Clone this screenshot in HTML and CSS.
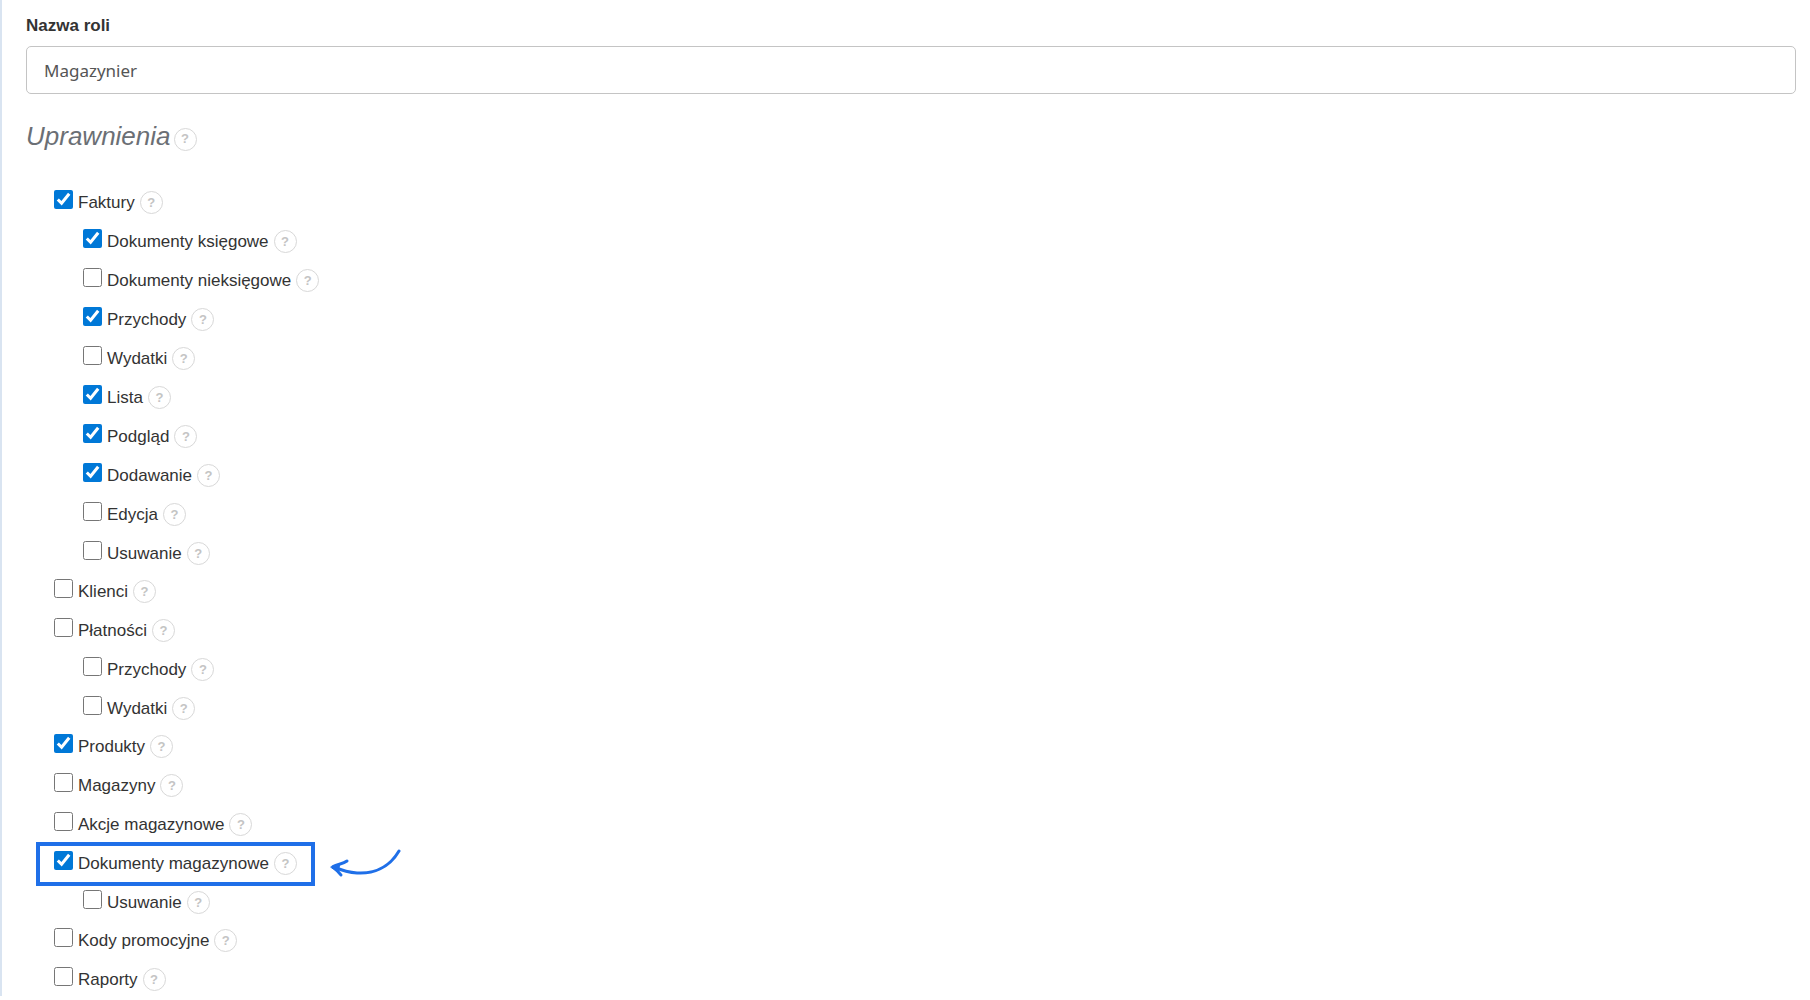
FILE: index.html
```html
<!DOCTYPE html>
<html lang="pl">
<head>
    <meta charset="utf-8">
    <meta name="viewport" content="width=device-width, initial-scale=1">
    <title>Uprawnienia roli</title>
    <link rel="stylesheet" href="styles.css">
</head>
<body>
    <form class="role-form">
        <label class="field-label" for="role-name">Nazwa roli</label>
        <input class="field-input" type="text" id="role-name" value="Magazynier">

        <h2 class="section-title">Uprawnienia <button type="button" class="help">?</button></h2>

        <ul class="permissions">
            <li>
                <div class="row"><label><input type="checkbox" checked>Faktury</label><button type="button" class="help">?</button></div>
                <ul>
                    <li><div class="row"><label><input type="checkbox" checked>Dokumenty księgowe</label><button type="button" class="help">?</button></div></li>
                    <li><div class="row"><label><input type="checkbox">Dokumenty nieksięgowe</label><button type="button" class="help">?</button></div></li>
                    <li><div class="row"><label><input type="checkbox" checked>Przychody</label><button type="button" class="help">?</button></div></li>
                    <li><div class="row"><label><input type="checkbox">Wydatki</label><button type="button" class="help">?</button></div></li>
                    <li><div class="row"><label><input type="checkbox" checked>Lista</label><button type="button" class="help">?</button></div></li>
                    <li><div class="row"><label><input type="checkbox" checked>Podgląd</label><button type="button" class="help">?</button></div></li>
                    <li><div class="row"><label><input type="checkbox" checked>Dodawanie</label><button type="button" class="help">?</button></div></li>
                    <li><div class="row"><label><input type="checkbox">Edycja</label><button type="button" class="help">?</button></div></li>
                    <li><div class="row"><label><input type="checkbox">Usuwanie</label><button type="button" class="help">?</button></div></li>
                </ul>
            </li>
            <li><div class="row"><label><input type="checkbox">Klienci</label><button type="button" class="help">?</button></div></li>
            <li>
                <div class="row"><label><input type="checkbox">Płatności</label><button type="button" class="help">?</button></div>
                <ul>
                    <li><div class="row"><label><input type="checkbox">Przychody</label><button type="button" class="help">?</button></div></li>
                    <li><div class="row"><label><input type="checkbox">Wydatki</label><button type="button" class="help">?</button></div></li>
                </ul>
            </li>
            <li><div class="row"><label><input type="checkbox" checked>Produkty</label><button type="button" class="help">?</button></div></li>
            <li><div class="row"><label><input type="checkbox">Magazyny</label><button type="button" class="help">?</button></div></li>
            <li><div class="row"><label><input type="checkbox">Akcje magazynowe</label><button type="button" class="help">?</button></div></li>
            <li>
                <div class="row highlight">
                    <label><input type="checkbox" checked>Dokumenty magazynowe</label><button type="button" class="help">?</button>
                    <svg class="arrow" width="72" height="30" viewBox="0 0 72 30" aria-hidden="true">
                        <path d="M69 2C59 19 43 25 27 24C18 23.500 11 21 4 18"/>
                        <path d="M17 12C13 15 8 15 3 17.500C6 20 8 23 11 26"/>
                        <path class="tip" d="M1 18L10 14.500L8 23Z"/>
                    </svg>
                </div>
                <ul>
                    <li><div class="row"><label><input type="checkbox">Usuwanie</label><button type="button" class="help">?</button></div></li>
                </ul>
            </li>
            <li><div class="row"><label><input type="checkbox">Kody promocyjne</label><button type="button" class="help">?</button></div></li>
            <li><div class="row"><label><input type="checkbox">Raporty</label><button type="button" class="help">?</button></div></li>
        </ul>
    </form>
</body>
</html>
```
FILE: styles.css
```css
* {
    box-sizing: border-box;
    margin: 0;
    padding: 0;
}

body {
    font-family: "Liberation Sans", Arial, sans-serif;
    font-size: 17px;
    line-height: 24px;
    color: #333;
    background: #fff;
}

.role-form {
    padding: 14px 14px 0 24px;
    border-left: 2px solid #d9e4f1;
}

.field-label {
    display: block;
    margin-bottom: 8px;
    font-weight: bold;
}

.field-input {
    display: block;
    width: 100%;
    height: 48px;
    padding: 0 17px;
    border: 1px solid #c4c4c4;
    border-radius: 5px;
    font-family: "Noto Sans", sans-serif;
    font-size: 17px;
    color: #555;
}

.section-title {
    display: flex;
    align-items: center;
    gap: 3px;
    height: 32px;
    margin: 26px 0 31px;
    font-size: 26px;
    font-style: italic;
    font-weight: normal;
    line-height: 32px;
    color: #6b6f75;
}

.permissions {
    margin-bottom: -3px;
    padding-left: 28px;
}

.permissions ul {
    margin-bottom: -1px;
    padding-left: 29px;
}

li {
    list-style: none;
}

.row {
    position: relative;
    display: flex;
    align-items: center;
    gap: 5px;
    width: max-content;
    height: 39px;
}

.row label {
    display: flex;
    align-items: center;
    gap: 5px;
}

.row input {
    width: 19px;
    height: 19px;
    margin-bottom: 7px;
    accent-color: #0078d7;
}

.help {
    width: 23px;
    height: 23px;
    border: 1px solid #d8d8d8;
    border-radius: 50%;
    background: none;
    font-family: inherit;
    font-size: 13px;
    font-weight: bold;
    line-height: 20px;
    text-align: center;
    color: #c4c4c4;
    cursor: pointer;
}

.section-title .help {
    margin-top: 6px;
}

/* marked permission */
.highlight::before {
    content: "";
    position: absolute;
    inset: -2px -18px -3px;
    border: 4px solid #1f6fe8;
    pointer-events: none;
}

.arrow {
    position: absolute;
    left: 100%;
    top: 5px;
    margin-left: 33px;
    fill: none;
    stroke: #1f6fe8;
    stroke-width: 3;
    stroke-linecap: round;
    stroke-linejoin: round;
}

.arrow .tip {
    fill: #1f6fe8;
    stroke-width: 1;
}
```
